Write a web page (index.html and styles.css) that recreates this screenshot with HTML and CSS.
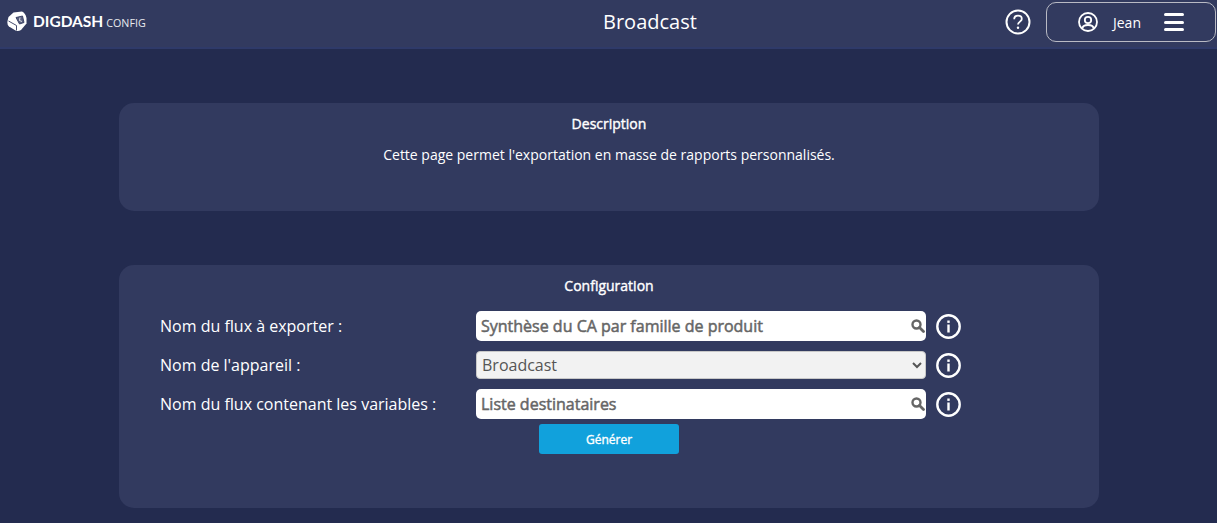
FILE: index.html
```html
<!DOCTYPE html>
<html lang="fr">
<head>
<meta charset="utf-8">
<title>Broadcast</title>
<link rel="stylesheet" href="styles.css">
</head>
<body>
<header class="topbar">
  <div class="brand">
    <svg class="brand-logo" viewBox="0 0 20 21" width="20" height="21">
      <path d="M6.500 1.500 L15 0.500 Q18.500 2 19.500 7 L19.500 12.500 L14 19 Q11 20.800 8.500 19.500 L2 15.500 Q0.300 14 0.300 11 L1.500 6 Z" fill="#fff"/>
      <path d="M9 6.500 L15.500 5 L17 11.500 L12.500 13 Z" fill="#5a6080" stroke="#323a5f" stroke-width="0.900"/>
      <path d="M12.500 9.500 L13 6.500 M12.500 9.500 L15 10.500" fill="none" stroke="#fff" stroke-width="0.800"/>
      <path d="M1.500 10 L9.500 14.500 L9.500 19.500" fill="none" stroke="#323a5f" stroke-width="0.900"/>
    </svg>
    <span class="brand-name">DIGDASH</span>
    <span class="brand-sub">CONFIG</span>
  </div>
  <h1 class="page-title">Broadcast</h1>
  <div class="top-actions">
    <svg class="help-icon" viewBox="0 0 26 26" width="26" height="26">
      <circle cx="13" cy="13" r="11.500" fill="none" stroke="#fff" stroke-width="2"/>
      <path d="M9.200 10.200 C9.200 7.800 11 6.700 13 6.700 C15.200 6.700 16.800 8 16.800 10 C16.800 12.500 13 12.800 13 15.500" fill="none" stroke="#fff" stroke-width="1.800"/>
      <circle cx="13" cy="18.800" r="1.200" fill="#fff"/>
    </svg>
    <div class="user-box">
      <svg class="user-icon" viewBox="0 0 20 20" width="20" height="20">
        <circle cx="10" cy="10" r="9" fill="none" stroke="#fff" stroke-width="1.800"/>
        <circle cx="10" cy="8" r="3.200" fill="none" stroke="#fff" stroke-width="1.800"/>
        <path d="M4.500 16 C5 13.500 7.500 13 10 13 C12.500 13 15 13.500 15.500 16" fill="none" stroke="#fff" stroke-width="1.800"/>
      </svg>
      <span class="user-name">Jean</span>
      <div class="burger"><span></span><span></span><span></span></div>
    </div>
  </div>
</header>

<main class="content">
  <section class="panel panel-desc">
    <h2 class="panel-title">Description</h2>
    <p class="panel-text">Cette page permet l'exportation en masse de rapports personnalisés.</p>
  </section>

  <section class="panel panel-config">
    <h2 class="panel-title">Configuration</h2>
    <div class="form-grid">
      <label class="field-label">Nom du flux à exporter :</label>
      <div class="search-field">
        <input class="search-input" type="text" value="Synthèse du CA par famille de produit">
        <svg class="search-icon" viewBox="0 0 14 14" width="14" height="14">
          <circle cx="5.500" cy="5.500" r="4" fill="none" stroke="#666" stroke-width="2.400"/>
          <path d="M8.500 8.500 L12.500 12.500" stroke="#666" stroke-width="2.800" stroke-linecap="round"/>
        </svg>
      </div>
      <svg class="info-icon" viewBox="0 0 25 25" width="25" height="25">
        <circle cx="12.500" cy="12.500" r="11.200" fill="none" stroke="#fff" stroke-width="2.400"/>
        <rect x="11.300" y="10.500" width="2.400" height="8" fill="#fff"/>
        <rect x="11.300" y="6.500" width="2.400" height="2.400" fill="#fff"/>
      </svg>

      <label class="field-label">Nom de l'appareil :</label>
      <select class="device-select"><option>Broadcast</option></select>
      <svg class="info-icon" viewBox="0 0 25 25" width="25" height="25">
        <circle cx="12.500" cy="12.500" r="11.200" fill="none" stroke="#fff" stroke-width="2.400"/>
        <rect x="11.300" y="10.500" width="2.400" height="8" fill="#fff"/>
        <rect x="11.300" y="6.500" width="2.400" height="2.400" fill="#fff"/>
      </svg>

      <label class="field-label">Nom du flux contenant les variables :</label>
      <div class="search-field">
        <input class="search-input" type="text" value="Liste destinataires">
        <svg class="search-icon" viewBox="0 0 14 14" width="14" height="14">
          <circle cx="5.500" cy="5.500" r="4" fill="none" stroke="#666" stroke-width="2.400"/>
          <path d="M8.500 8.500 L12.500 12.500" stroke="#666" stroke-width="2.800" stroke-linecap="round"/>
        </svg>
      </div>
      <svg class="info-icon" viewBox="0 0 25 25" width="25" height="25">
        <circle cx="12.500" cy="12.500" r="11.200" fill="none" stroke="#fff" stroke-width="2.400"/>
        <rect x="11.300" y="10.500" width="2.400" height="8" fill="#fff"/>
        <rect x="11.300" y="6.500" width="2.400" height="2.400" fill="#fff"/>
      </svg>

      <button class="generate" type="button">Générer</button>
    </div>
  </section>
</main>
</body>
</html>
```

FILE: styles.css
```css
* { box-sizing: border-box; }
html, body { margin: 0; height: 100%; }
body {
  background: #232b4f;
  color: #fff;
  font-family: "Open Sans", sans-serif;
  overflow: hidden;
}
.topbar {
  height: 49px;
  background: #323a5f;
  border-bottom: 2px solid #2f3a69;
  display: grid;
  grid-template-columns: 603px auto 1fr;
  align-items: start;
}
.brand { display: flex; align-items: center; padding-left: 7px; height: 43px; }
.brand-logo { display: block; }
.brand-name {
  margin-left: 6px;
  font-family: "Lato", sans-serif;
  font-weight: 700;
  font-size: 15.500px;
  line-height: 20px;
  margin-top: -1px;
}
.brand-sub { margin-left: 3px; font-size: 10.700px; margin-top: 3px; color: #e8e9ee; }
.page-title { margin: 0; font-size: 20px; font-weight: 400; line-height: 44px; }
.top-actions { display: flex; justify-content: flex-end; align-items: center; padding-right: 1px; height: 44px; }
.help-icon { display: block; margin-right: 15px; }
.user-box {
  width: 170px;
  height: 40px;
  border: 1px solid #b9bac4;
  border-radius: 10px;
  display: flex;
  align-items: center;
  padding-left: 31px;
}
.user-icon { display: block; }
.user-name { margin-left: 15px; font-size: 14px; }
.burger { margin-left: 23px; display: flex; flex-direction: column; gap: 4.5px; width: 20px; }
.burger span { display: block; height: 3px; background: #fff; border-radius: 2px; }
.content { width: 980px; margin: 54px 0 0 119px; display: flex; flex-direction: column; gap: 54px; }
.panel { background: #323a5f; border-radius: 15px; padding-top: 11px; }
.panel-desc { height: 108px; }
.panel-config { height: 243px; }
.panel-title {
  margin: 0;
  text-align: center;
  font-size: 14px;
  font-weight: 400;
  line-height: 19px;
  -webkit-text-stroke: 0.4px #fff;
}
.panel-text { margin: 12px 0 0; text-align: center; font-size: 14px; line-height: 19px; }
.form-grid {
  margin: 16px 0 0 41px;
  display: grid;
  grid-template-columns: 316px 450px 25px;
  column-gap: 0;
  align-items: center;
}
.field-label { font-size: 16px; line-height: 20px; grid-column: 1; }
.search-field {
  height: 30px;
  background: #fff;
  border-radius: 5px;
  display: flex;
  align-items: center;
  padding: 0 1px 0 5px;
}
.search-input {
  flex: 1;
  min-width: 0;
  border: 0;
  outline: 0;
  padding: 0;
  background: transparent;
  font-family: "Open Sans", sans-serif;
  font-size: 16px;
  font-weight: 400;
  color: #666;
  -webkit-text-stroke: 0.5px #666;
}
.search-icon { display: block; }
.device-select {
  height: 28px;
  width: 450px;
  margin: 10px 0;
  padding-left: 1px;
  background-color: #f2f2f2;
  border: 1px solid #c8c8c8;
  border-radius: 4px;
  color: #555;
  font-family: "Open Sans", sans-serif;
  font-size: 16px;
}
.info-icon { display: block; margin-left: 10px; }
.generate {
  grid-column: 2;
  justify-self: start;
  margin: 5px 0 0 63px;
  width: 140px;
  height: 30px;
  border: 0;
  border-radius: 3px;
  background: #11a1dc;
  color: #fff;
  font-family: "Open Sans", sans-serif;
  font-size: 12px;
  font-weight: 400;
  -webkit-text-stroke: 0.4px #fff;
}
```
